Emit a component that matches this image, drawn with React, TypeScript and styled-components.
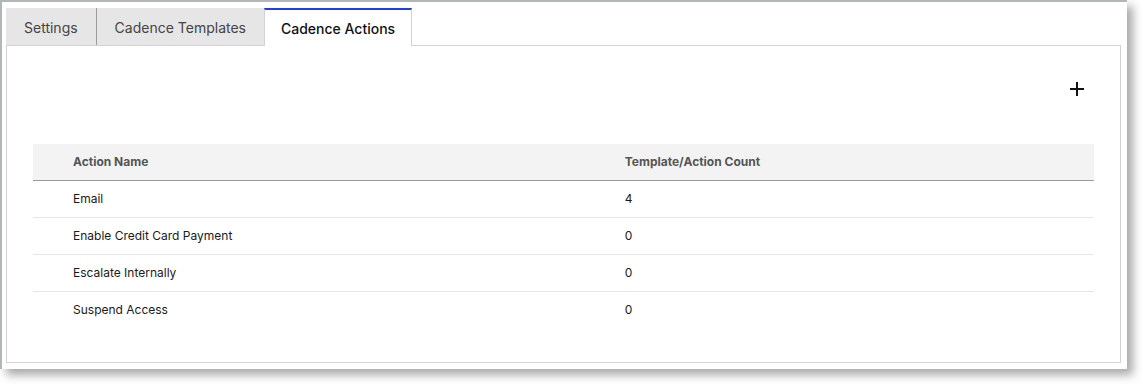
import styled, { createGlobalStyle } from "styled-components";

const GlobalStyle = createGlobalStyle`
  body {
    margin: 0;
    background: #ffffff;
    font-family: Inter, "Liberation Sans", sans-serif;
  }
`;

const tabs = ["Settings", "Cadence Templates", "Cadence Actions"];

const actions = [
  { name: "Email", count: 4 },
  { name: "Enable Credit Card Payment", count: 0 },
  { name: "Escalate Internally", count: 0 },
  { name: "Suspend Access", count: 0 },
];

export default function App() {
  const active = 2;
  return (
    <>
      <GlobalStyle />
      <Page>
        <Window>
          <TabBar>
            {tabs.map((t, i) => (
              <Tab key={t} active={i === active} divider={i === 0}>
                {t}
              </Tab>
            ))}
          </TabBar>
          <Panel>
            <Toolbar>
              <AddButton aria-label="Add action">
                <svg width="16" height="16" viewBox="0 0 16 16">
                  <path
                    d="M8 1v14M1 8h14"
                    stroke="#111"
                    strokeWidth="2"
                    fill="none"
                  />
                </svg>
              </AddButton>
            </Toolbar>
            <Table>
              <thead>
                <tr>
                  <HeadCell>Action Name</HeadCell>
                  <HeadCell>Template/Action Count</HeadCell>
                </tr>
              </thead>
              <tbody>
                {actions.map((a, i) => (
                  <Row key={a.name} last={i === actions.length - 1}>
                    <Cell>{a.name}</Cell>
                    <Cell>{a.count}</Cell>
                  </Row>
                ))}
              </tbody>
            </Table>
          </Panel>
        </Window>
      </Page>
    </>
  );
}

const Page = styled.div`
  width: 1142px;
  height: 385px;
  overflow: hidden;
`;

const Window = styled.div`
  box-sizing: border-box;
  width: 1127px;
  height: 369px;
  background: #ffffff;
  border-top: 2px solid #b3b6b9;
  border-left: 2px solid #b3b6b9;
  padding: 6px 6px 6px 4px;
  display: flex;
  flex-direction: column;
  box-shadow: 6px 6px 9px rgba(0, 0, 0, 0.34);
`;

const TabBar = styled.div`
  display: flex;
  height: 37px;
  position: relative;
  z-index: 1;
`;

const Tab = styled.div<{ active: boolean; divider: boolean }>`
  box-sizing: border-box;
  display: flex;
  align-items: center;
  padding: ${({ active }) => (active ? "0 16px" : "1px 18px 0")};
  height: ${({ active }) => (active ? "38px" : "37px")};
  font-size: 14px;
  color: ${({ active }) => (active ? "#111" : "#444")};
  font-weight: ${({ active }) => (active ? 500 : 400)};
  background: ${({ active }) => (active ? "#ffffff" : "#e6e6e6")};
  border-top: ${({ active }) => (active ? "2px solid #1f3fe0" : "none")};
  border-left: ${({ active }) => (active ? "1px solid #d2d2d2" : "none")};
  border-right: ${({ active, divider }) =>
    active ? "1px solid #d2d2d2" : divider ? "1px solid #9c9c9c" : "none"};
`;

const Panel = styled.div`
  flex: 1;
  border: 1px solid #d2d2d2;
  padding: 0 26px;
`;

const Toolbar = styled.div`
  display: flex;
  justify-content: flex-end;
  height: 98px;
  padding-top: 31px;
  box-sizing: border-box;
`;

const AddButton = styled.button`
  width: 24px;
  height: 24px;
  margin-right: 5px;
  padding: 0;
  border: none;
  background: transparent;
  display: flex;
  align-items: center;
  justify-content: center;
  cursor: pointer;
`;

const Table = styled.table`
  width: 100%;
  border-collapse: collapse;
  font-size: 12px;
  color: #1a1a1a;
`;

const HeadCell = styled.th`
  text-align: left;
  font-weight: 700;
  color: #555;
  background: #f3f3f3;
  height: 34px;
  padding: 0 0 2px 40px;
  border-bottom: 1px solid #999;
  &:first-child {
    width: 52%;
  }
`;

const Row = styled.tr<{ last: boolean }>`
  border-bottom: ${({ last }) => (last ? "none" : "1px solid #e6e6e6")};
`;

const Cell = styled.td`
  height: 35px;
  padding: 0 0 1px 40px;
`;
